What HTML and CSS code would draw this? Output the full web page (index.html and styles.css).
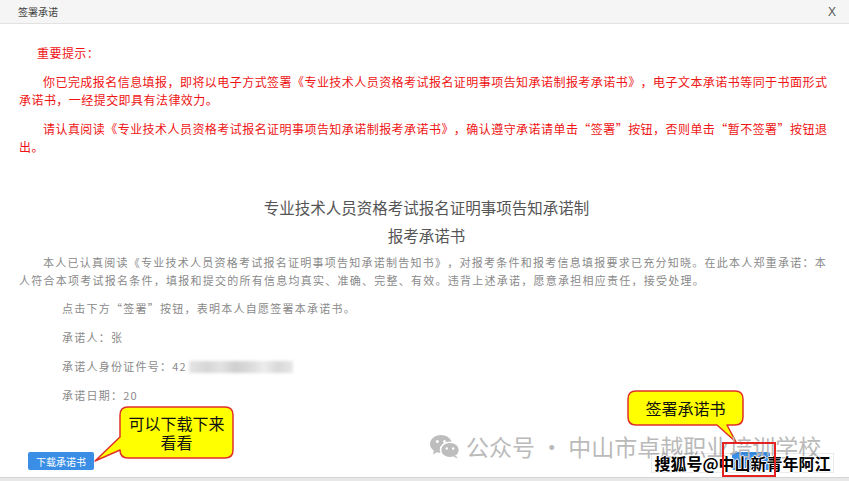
FILE: index.html
```html
<!DOCTYPE html>
<html lang="zh-CN">
<head>
    <meta charset="UTF-8">
    <meta name="viewport" content="width=device-width, initial-scale=1.0">
    <title>签署承诺</title>
    <link rel="stylesheet" href="styles.css">
</head>
<body>
    <!-- Dialog -->
    <div class="dialog">
        <div class="dialog-header">
            <span class="dialog-title">签署承诺</span>
            <span class="dialog-close">X</span>
        </div>

        <div class="dialog-body">
            <div class="notice">
                <p class="notice-head">重要提示：</p>
                <p>你已完成报名信息填报，即将以电子方式签署《专业技术人员资格考试报名证明事项告知承诺制报考承诺书》，电子文本承诺书等同于书面形式承诺书，一经提交即具有法律效力。</p>
                <p>请认真阅读《专业技术人员资格考试报名证明事项告知承诺制报考承诺书》，确认遵守承诺请单击“签署”按钮，否则单击“暂不签署”按钮退出。</p>
            </div>

            <div class="letter">
                <h2>专业技术人员资格考试报名证明事项告知承诺制<br>报考承诺书</h2>
                <p class="letter-text">本人已认真阅读《专业技术人员资格考试报名证明事项告知承诺制告知书》，对报考条件和报考信息填报要求已充分知晓。在此本人郑重承诺：本人符合本项考试报名条件，填报和提交的所有信息均真实、准确、完整、有效。违背上述承诺，愿意承担相应责任，接受处理。</p>
                <p class="letter-line">点击下方“签署”按钮，表明本人自愿签署本承诺书。</p>
                <p class="letter-line">承诺人：张</p>
                <p class="letter-line">承诺人身份证件号：42<span class="blurred"></span></p>
                <p class="letter-line">承诺日期：20</p>
            </div>

            <div class="actions">
                <button class="btn">下载承诺书</button>
                <button class="btn btn-sign" aria-label="签署"></button>
            </div>
        </div>

        <div class="dialog-footer"></div>
    </div>

    <!-- Callouts -->
    <div class="callout callout-download">
        <svg width="148" height="62" viewBox="0 0 148 62">
            <path d="M38,4 H135 Q143,4 143,12 V47 Q143,55 135,55 H38 Q30,55 30,47 L5,58 L30,34 V12 Q30,4 38,4 Z" fill="#ffff00" stroke="#e0302a" stroke-width="1.5" stroke-linejoin="round"/>
        </svg>
        <div class="callout-text">可以下载下来<br>看看</div>
    </div>

    <div class="callout callout-sign">
        <svg width="124" height="60" viewBox="0 0 124 60">
            <path d="M12,4 H111 Q119,4 119,12 V30 Q119,38 111,38 H103 L112,55 L93,38 H12 Q4,38 4,30 V12 Q4,4 12,4 Z" fill="#ffff00" stroke="#e0302a" stroke-width="1.5" stroke-linejoin="round"/>
        </svg>
        <div class="callout-text">签署承诺书</div>
    </div>

    <!-- Watermarks -->
    <div class="wx-mark">
        <svg width="30" height="25" viewBox="0 0 30 25">
            <path d="M11,1 C17,1 22,5 22,10 C22,15 17,19 11,19 C9.5,19 8,18.8 6.8,18.3 L3,20.5 L3.8,16.6 C1.5,15 0,12.7 0,10 C0,5 5,1 11,1 Z" fill="#bdbdbd"/>
            <ellipse cx="20" cy="16" rx="9.5" ry="7.8" fill="#bdbdbd" stroke="#fff" stroke-width="1.6"/>
            <path d="M26,21.5 L27.5,24.5 L23.5,22.8 Z" fill="#bdbdbd"/>
            <circle cx="7.3" cy="7.5" r="1.5" fill="#fff"/>
            <circle cx="14.5" cy="7.5" r="1.5" fill="#fff"/>
            <circle cx="16.8" cy="14.5" r="1.2" fill="#fff"/>
            <circle cx="23.2" cy="14.5" r="1.2" fill="#fff"/>
        </svg>
        <span>公众号 · 中山市卓越职业培训学校</span>
    </div>

    <div class="sohu-mark">搜狐号@中山新青年阿江</div>

    <div class="mark-box"></div>
</body>
</html>
```

FILE: styles.css
```css
/* Reset */
* {
    margin: 0;
    padding: 0;
    box-sizing: border-box;
}

body {
    font-family: "Noto Sans CJK SC", "Noto Sans", sans-serif;
    background-color: #fff;
    width: 849px;
    height: 481px;
    overflow: hidden;
    position: relative;
    text-spacing-trim: space-all;
}

/* Dialog */
.dialog {
    display: flex;
    flex-direction: column;
    height: 481px;
}

.dialog-header {
    flex: none;
    height: 24px;
    display: flex;
    align-items: center;
    justify-content: space-between;
    padding: 0 13px 0 18px;
    background-color: #f5f5f5;
    border-bottom: 1px solid #e2e2e2;
    font-size: 10px;
    color: #444;
}

.dialog-close {
    font-family: "Liberation Sans", sans-serif;
    font-size: 12px;
    color: #555;
}

.dialog-body {
    flex: 1;
    padding: 20px 15px 0 19px;
    overflow: hidden;
}

/* Red notice */
.notice p {
    color: #ee1414;
    font-size: 12px;
    letter-spacing: 0.45px;
    line-height: 18px;
    margin-bottom: 11px;
    text-indent: 24px;
}

.notice .notice-head {
    text-indent: 18px;
}

/* Letter */
.letter h2 {
    margin-top: 37px;
    margin-bottom: 4px;
    font-size: 15.5px;
    font-weight: normal;
    line-height: 28px;
    color: #555;
    text-align: center;
}

.letter p {
    font-size: 11px;
    letter-spacing: 1.25px;
    line-height: 18px;
    color: #8a8a8a;
}

.letter-text {
    text-indent: 24px;
    margin-bottom: 10px;
}

.letter-line {
    padding-left: 43px;
    margin-bottom: 11px;
}

.blurred {
    display: inline-block;
    width: 104px;
    height: 12px;
    margin-left: 2px;
    vertical-align: -2px;
    background: linear-gradient(90deg, #e4e4e4 0, #d6d6d6 18%, #e2e2e2 30%, #cfcfcf 45%, #dcdcdc 60%, #ececec 72%, #d8d8d8 86%, #e8e8e8 100%);
    filter: blur(1.5px);
}

/* Buttons */
.actions {
    margin-top: 48px;
    display: flex;
    justify-content: space-between;
    padding: 0 64px 0 9px;
}

.btn {
    height: 18px;
    padding: 0 8px;
    border: none;
    border-radius: 2px;
    background-color: #3a8ee6;
    color: #fff;
    font-family: inherit;
    font-size: 10px;
}

.btn-sign {
    width: 38px;
}

.dialog-footer {
    flex: none;
    height: 4px;
    background-color: #e8e8e8;
    border-top: 1px solid #d4d4d4;
}

/* Callouts */
.callout {
    position: absolute;
}

.callout svg {
    display: block;
}

.callout-text {
    position: absolute;
    display: flex;
    align-items: center;
    justify-content: center;
    text-align: center;
    font-size: 16px;
    line-height: 19px;
    color: #111;
}

.callout-download {
    left: 90px;
    top: 403px;
}

.callout-download .callout-text {
    left: 30px;
    top: 4px;
    width: 113px;
    height: 51px;
}

.callout-sign {
    left: 624px;
    top: 387px;
}

.callout-sign .callout-text {
    left: 4px;
    top: 4px;
    width: 115px;
    height: 34px;
}

.mark-box {
    position: absolute;
    left: 722px;
    top: 442px;
    width: 54px;
    height: 35px;
    border: 2px solid #e52222;
}

/* Watermarks */
.wx-mark {
    position: absolute;
    left: 430px;
    top: 432px;
    display: flex;
    align-items: center;
    gap: 6px;
    font-size: 23px;
    line-height: 28px;
    color: #bababa;
}

.wx-mark svg {
    display: block;
}

.sohu-mark {
    position: absolute;
    left: 651px;
    top: 453px;
    width: 183px;
    height: 20px;
    border: 1px solid rgba(0, 0, 0, 0.08);
    font-size: 16px;
    font-weight: bold;
    line-height: 18px;
    text-align: center;
    color: #000;
    text-shadow: 1px 0 #fff, -1px 0 #fff, 0 1px #fff, 0 -1px #fff;
}
```
